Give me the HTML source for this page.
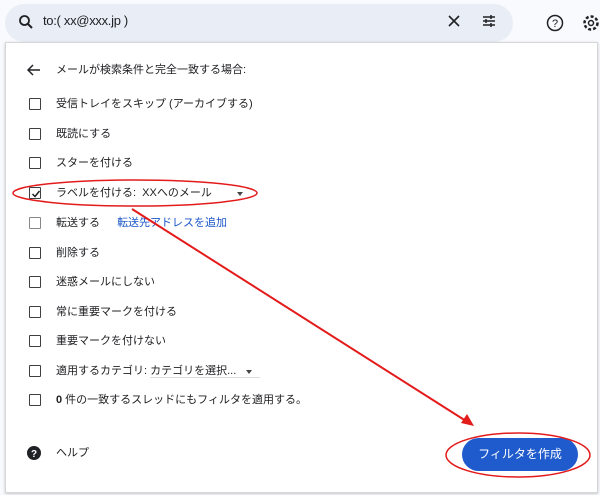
<!DOCTYPE html>
<html><head><meta charset="utf-8"><style>
body{margin:0;width:600px;height:495px;background:#f8fafd;font-family:"Liberation Sans","Noto Sans CJK JP",sans-serif;position:relative;overflow:hidden;color:#202124}
.search{position:absolute;left:5px;top:4px;width:508px;height:38px;background:#e9eef6;border-radius:19px}
.panel{position:absolute;left:5px;top:42px;width:591px;height:449px;background:#fff;border:1px solid #d6d6d6;box-shadow:0 1px 3px rgba(0,0,0,.2)}
.row{position:absolute;left:56px;font-size:11px;line-height:14px}
.cb{position:absolute;left:29px;width:10px;height:10px;border:1.7px solid #3c4043;border-radius:1px}
.btn{position:absolute;left:462px;top:438px;width:116px;height:33px;background:#1f5bcc;border-radius:17px;color:#fff;font-size:12px;text-align:center;line-height:33px}
</style></head><body>
<div class="search"></div>
<svg style="position:absolute;left:18px;top:14px" width="16" height="16"><circle cx="6.5" cy="6.5" r="4.5" fill="none" stroke="#202124" stroke-width="1.8"/><line x1="10" y1="10" x2="14" y2="14" stroke="#202124" stroke-width="2"/></svg>
<div style="position:absolute;left:43px;top:13px;font-size:13px;letter-spacing:-0.3px">to:( xx@xxx.jp )</div>
<svg style="position:absolute;left:448px;top:15px" width="12" height="12"><path d="M1 1L11 11M11 1L1 11" stroke="#202124" stroke-width="1.6"/></svg>
<svg style="position:absolute;left:482px;top:14px" width="14" height="14"><path d="M1 3H13M1 7H13M1 11H13" stroke="#202124" stroke-width="1.5"/><path d="M9 1V5M4 5V9M9 9V13" stroke="#202124" stroke-width="1.5"/></svg>
<svg style="position:absolute;left:546px;top:14px" width="18" height="18"><circle cx="9" cy="9" r="7.5" fill="none" stroke="#202124" stroke-width="1.5"/><text x="9" y="13" font-size="11" text-anchor="middle" fill="#202124" font-family="Liberation Sans">?</text></svg>
<svg style="position:absolute;left:582px;top:13px" width="18" height="20"><circle cx="9" cy="10" r="6.5" fill="none" stroke="#202124" stroke-width="2.5" stroke-dasharray="3 2"/><circle cx="9" cy="10" r="2.5" fill="none" stroke="#202124" stroke-width="1.5"/></svg>
<div class="panel"></div>
<svg style="position:absolute;left:27px;top:64px" width="14" height="12"><path d="M13 6H2M6 1L1 6L6 11" fill="none" stroke="#202124" stroke-width="1.5"/></svg>
<div class="row" style="top:63px">メールが検索条件と完全一致する場合:</div>
<div class="cb" style="top:98px"></div><div class="row" style="top:97px">受信トレイをスキップ (アーカイブする)</div>
<div class="cb" style="top:128px"></div><div class="row" style="top:127px">既読にする</div>
<div class="cb" style="top:157px"></div><div class="row" style="top:156px">スターを付ける</div>
<div class="cb" style="top:187px"></div><svg style="position:absolute;left:31px;top:189px" width="10" height="10"><path d="M1.5 5L4 7.5L8.5 2" fill="none" stroke="#202124" stroke-width="1.5"/></svg>
<div class="row" style="top:186px">ラベルを付ける: &nbsp;XXへのメール</div>
<div style="position:absolute;left:237px;top:192px;border:3.5px solid transparent;border-top:4px solid #444;"></div>
<div class="cb" style="top:217px;border-color:#888"></div><div class="row" style="top:216px">転送する <span style="color:#1a56c8;margin-left:14px">転送先アドレスを追加</span></div>
<div class="cb" style="top:247px"></div><div class="row" style="top:246px">削除する</div>
<div class="cb" style="top:276px"></div><div class="row" style="top:275px">迷惑メールにしない</div>
<div class="cb" style="top:306px"></div><div class="row" style="top:305px">常に重要マークを付ける</div>
<div class="cb" style="top:335px"></div><div class="row" style="top:334px">重要マークを付けない</div>
<div class="cb" style="top:365px"></div><div class="row" style="top:364px">適用するカテゴリ: <span style="border-bottom:1px solid #ddd;padding-right:24px">カテゴリを選択...</span></div>
<div style="position:absolute;left:246px;top:370px;border:3.5px solid transparent;border-top:4px solid #444;"></div>
<div class="cb" style="top:394px"></div><div class="row" style="top:393px"><b>0</b> 件の一致するスレッドにもフィルタを適用する。</div>
<svg style="position:absolute;left:27px;top:446px" width="14" height="14"><circle cx="7" cy="7" r="7" fill="#202124"/><text x="7" y="11" font-size="10" font-weight="bold" text-anchor="middle" fill="#fff" font-family="Liberation Sans">?</text></svg>
<div class="row" style="top:446px">ヘルプ</div>
<div class="btn">フィルタを作成</div>
<svg style="position:absolute;left:0;top:0" width="600" height="495">
<ellipse cx="135" cy="193" rx="122" ry="13" fill="none" stroke="#e41b1b" stroke-width="1.5"/>
<ellipse cx="518" cy="455" rx="72" ry="22" fill="none" stroke="#e41b1b" stroke-width="1.5"/>
<line x1="132" y1="209" x2="466" y2="421" stroke="#e41b1b" stroke-width="2"/>
<path d="M474 426L461 423L467 414Z" fill="#e41b1b"/>
</svg>
</body></html>
